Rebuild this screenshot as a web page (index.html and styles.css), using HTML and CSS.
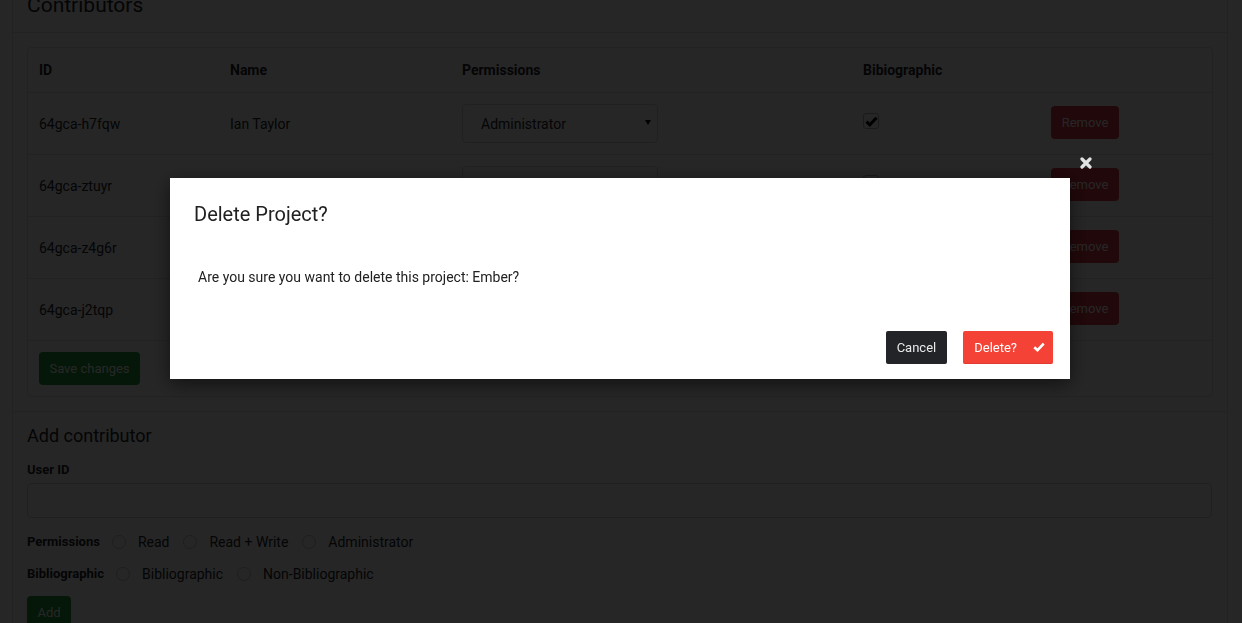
FILE: index.html
```html
<!DOCTYPE html>
<html lang="en">
<head>
<meta charset="utf-8">
<title>Contributors</title>
<link rel="stylesheet" href="styles.css">
</head>
<body>
<div class="panel">
  <div class="panel-head">
    <h3 class="panel-title">Contributors</h3>
  </div>
  <div class="panel-body">
    <div class="card">
      <table class="table">
        <colgroup>
          <col class="c-id"><col class="c-name"><col class="c-perm"><col class="c-bib"><col class="c-act">
        </colgroup>
        <thead>
          <tr><th>ID</th><th>Name</th><th>Permissions</th><th>Bibiographic</th><th></th></tr>
        </thead>
        <tbody>
          <tr class="row">
            <td>64gca-h7fqw</td>
            <td>Ian Taylor</td>
            <td><div class="select"><span>Administrator</span><svg class="caret" width="6" height="5" viewBox="0 0 6 5"><path d="M0 0H6L3 5Z" fill="#000"/></svg></div></td>
            <td><span class="checkbox"><svg width="13" height="11" viewBox="0 0 13 11"><path d="M1.5 5.6L4.8 8.8L11.5 1.8" fill="none" stroke="#000" stroke-width="3"/></svg></span></td>
            <td><button class="btn btn-red">Remove</button></td>
          </tr>
          <tr class="row">
            <td>64gca-ztuyr</td>
            <td>Sarah Jones</td>
            <td><div class="select"><span>Read + Write</span><svg class="caret" width="6" height="5" viewBox="0 0 6 5"><path d="M0 0H6L3 5Z" fill="#000"/></svg></div></td>
            <td><span class="checkbox"></span></td>
            <td><button class="btn btn-red">Remove</button></td>
          </tr>
          <tr class="row">
            <td>64gca-z4g6r</td>
            <td>Mark Lewis</td>
            <td><div class="select"><span>Read</span><svg class="caret" width="6" height="5" viewBox="0 0 6 5"><path d="M0 0H6L3 5Z" fill="#000"/></svg></div></td>
            <td><span class="checkbox"></span></td>
            <td><button class="btn btn-red">Remove</button></td>
          </tr>
          <tr class="row">
            <td>64gca-j2tqp</td>
            <td>Anna Clark</td>
            <td><div class="select"><span>Read</span><svg class="caret" width="6" height="5" viewBox="0 0 6 5"><path d="M0 0H6L3 5Z" fill="#000"/></svg></div></td>
            <td><span class="checkbox"></span></td>
            <td><button class="btn btn-red">Remove</button></td>
          </tr>
          <tr class="save-row">
            <td colspan="5"><button class="btn btn-green btn-save">Save changes</button></td>
          </tr>
        </tbody>
      </table>
    </div>
  </div>
  <div class="panel-section">
    <h4 class="section-title">Add contributor</h4>
    <div class="field-label">User ID</div>
    <div class="input"></div>
    <div class="radio-row">
      <span class="radio-title">Permissions</span>
      <span class="radio"><span class="circle"></span>Read</span>
      <span class="radio"><span class="circle"></span>Read + Write</span>
      <span class="radio"><span class="circle"></span>Administrator</span>
    </div>
    <div class="radio-row radio-row-2">
      <span class="radio-title">Bibliographic</span>
      <span class="radio"><span class="circle"></span>Bibliographic</span>
      <span class="radio"><span class="circle"></span>Non-Bibliographic</span>
    </div>
    <button class="btn btn-green btn-add">Add</button>
  </div>
</div>

<div class="backdrop">
  <div class="modal">
    <svg class="close" width="12" height="12" viewBox="0 0 12 12"><path d="M2 2L10 10M10 2L2 10" stroke="#e2e2e2" stroke-width="3.2" stroke-linecap="round"/></svg>
    <h4 class="modal-title">Delete Project?</h4>
    <p class="modal-text">Are you sure you want to delete this project: Ember?</p>
    <div class="modal-footer">
      <button class="mbtn mbtn-dark">Cancel</button>
      <button class="mbtn mbtn-red">Delete?<svg width="12" height="10" viewBox="0 0 12 10"><path d="M1.3 5.2L4.5 8.2L10.7 1.6" fill="none" stroke="#fff" stroke-width="2.6"/></svg></button>
    </div>
  </div>
</div>
</body>
</html>
```

FILE: styles.css
```css
* { box-sizing: border-box; }
html, body { margin: 0; padding: 0; }
body {
  font-family: Roboto, "Liberation Sans", sans-serif;
  font-size: 14px;
  color: #212529;
  background: #fff;
  height: 623px;
  overflow: hidden;
}

.panel {
  margin: -23px 14px 0 12px;
  border: 1px solid #dee2e6;
}
.panel-head {
  padding: 15px 14px;
  border-bottom: 1px solid #dee2e6;
}
.panel-title {
  margin: 0;
  font-size: 21px;
  line-height: 24px;
  font-weight: 400;
}
.panel-body { padding: 14px; }

.card {
  border: 1px solid #dee2e6;
  border-radius: 4px;
}
.table {
  width: 100%;
  border-collapse: collapse;
  table-layout: fixed;
}
.c-id { width: 190px; }
.c-name { width: 232px; }
.c-perm { width: 401px; }
.c-bib { width: 188px; }
.table th {
  text-align: left;
  font-weight: 700;
  padding: 12px;
  line-height: 20px;
}
.table td {
  padding: 11px 12px;
  line-height: 20px;
  vertical-align: middle;
}
.table th:first-child,
.table td:first-child { padding-left: 11px; }
.table tbody tr { border-top: 1px solid #dee2e6; }
.row td { height: 61px; }
.row td:last-child { padding-bottom: 13px; }

.select {
  width: 196px;
  height: 39px;
  border: 1px solid #ced4da;
  border-radius: 4px;
  display: flex;
  align-items: center;
  justify-content: space-between;
  padding: 1px 6px 0 18px;
}
.caret { margin-top: -3px; }

.checkbox {
  display: flex;
  align-items: center;
  justify-content: center;
  width: 16px;
  height: 16px;
  margin-bottom: 5px;
  border: 1px solid #adb5bd;
  border-radius: 3px;
}

.btn {
  font-family: inherit;
  font-size: 13px;
  line-height: 21px;
  height: 33px;
  padding: 6px 10px;
  border: none;
  border-radius: 4px;
  color: #fff;
}
.btn-red { background: #dc3545; width: 68px; padding: 6px 0; }
.btn-green { background: #1e9a3a; }
.btn-save { width: 101px; padding: 6px 0; }

.panel-section {
  border-top: 1px solid #dee2e6;
  padding: 12px 14px 14px;
}
.section-title {
  margin: 0;
  font-size: 18px;
  line-height: 24px;
  font-weight: 400;
}
.field-label {
  margin-top: 13px;
  font-size: 13px;
  font-weight: 700;
  line-height: 18px;
}
.input {
  margin-top: 4px;
  height: 35px;
  border: 1px solid #ced4da;
  border-radius: 4px;
  margin-right: 1px;
}
.radio-row {
  margin-top: 15px;
  display: flex;
  align-items: center;
  line-height: 18px;
}
.radio-row-2 { margin-top: 14px; }
.radio-title {
  font-size: 13px;
  font-weight: 700;
}
.radio {
  display: flex;
  align-items: center;
  gap: 12px;
  margin-left: 12px;
}
.radio + .radio { margin-left: 14px; }
.circle {
  width: 14px;
  height: 14px;
  border: 1px solid #c4c4c4;
  border-radius: 50%;
}
.btn-add { margin-top: 13px; width: 44px; padding: 6px 0; }

.backdrop {
  position: fixed;
  inset: 0;
  background: rgba(0, 0, 0, 0.85);
  display: flex;
  justify-content: center;
  align-items: flex-start;
  padding: 178px 0 0 0;
}
.modal {
  position: relative;
  width: 900px;
  margin-left: -2px;
  background: #fff;
  padding: 24px 17px 15px 24px;
  box-shadow: 0 5px 18px rgba(0, 0, 0, 0.55);
  color: #212121;
}
.close {
  position: absolute;
  top: -21px;
  right: -22px;
}
.modal-title {
  margin: 0;
  font-size: 20px;
  line-height: 24px;
  font-weight: 400;
}
.modal-text {
  margin: 41px 0 0 4px;
  line-height: 20px;
}
.modal-footer {
  margin-top: 44px;
  display: flex;
  justify-content: flex-end;
  gap: 16px;
}
.mbtn {
  font-family: inherit;
  font-size: 13px;
  height: 33px;
  line-height: 33px;
  border: none;
  border-radius: 2px;
  padding: 0 11px;
  display: flex;
  align-items: center;
}
.mbtn-dark { background: #222428; color: #e9e9e9; }
.mbtn-red {
  background: #f44336;
  color: #fff;
  padding: 0 8px 0 11px;
  gap: 16px;
  border-bottom: 1px solid #e0392d;
}
```
